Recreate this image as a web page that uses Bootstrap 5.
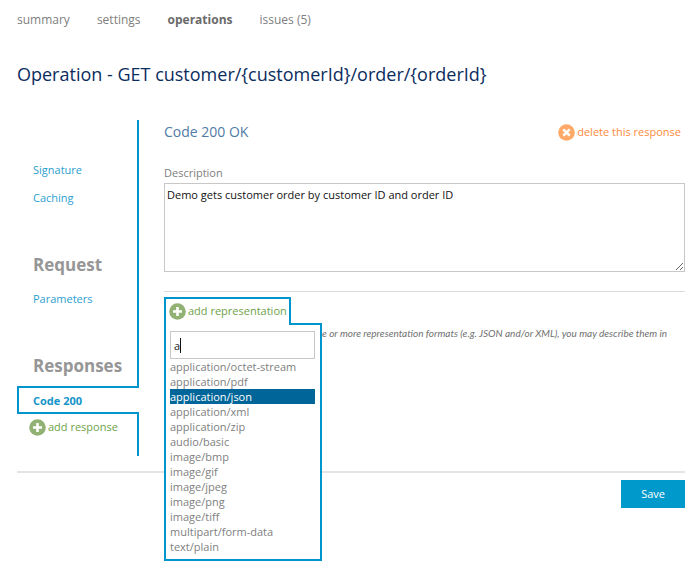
<!DOCTYPE html>
<html lang="en">
<head>
<meta charset="utf-8">
<meta name="viewport" content="width=device-width, initial-scale=1">
<title>Operation - GET customer/{customerId}/order/{orderId}</title>
<link href="https://cdn.jsdelivr.net/npm/bootstrap@5.3.0/dist/css/bootstrap.min.css" rel="stylesheet">
<style>
  body { font-family: "Open Sans", "Noto Sans", sans-serif; font-size: 11px; line-height: 15px; color: #808080; background: #fff; }
  a { text-decoration: none; }
  .page { padding: 10px 15px 0 17px; }
  .top-nav { gap: 27px; font-size: 12px; line-height: 20px; }
  .top-nav .nav-link { padding: 0; color: #808080; }
  .top-nav .nav-link.active { color: #6a6a6a; font-weight: 700; }
  .page-title { margin: 30px 0 32px; font-size: 18px; line-height: 28px; font-weight: 400; color: #0b2d5e; }
  .columns { padding-bottom: 15px; border-bottom: 2px solid #e4e4e4; }
  .side { width: 122px; margin-right: 25px; }
  .side-part { border-right: 2px solid #0096cd; padding-left: 16px; }
  .side-part a { display: block; line-height: 16px; color: #2ba0d0; }
  .side-part h2 { margin: 0; font-size: 17px; line-height: 24px; font-weight: 700; color: #969696; }
  .part-signature { padding-top: 42px; height: 133px; }
  .part-signature a + a { margin-top: 12px; }
  .part-request { height: 101px; }
  .part-request a { margin-top: 14px; }
  .part-responses { height: 34px; }
  .side-current { display: block; border: 2px solid #0096cd; border-right: 0; margin-top: -2px; margin-right: 1px; padding: 3px 0 2px 14px; line-height: 19px; font-weight: 700; color: #1494c8; }
  .side-current:hover { color: #1494c8; }
  .part-add { height: 44px; margin-top: -2px; padding: 6px 0 0 12px; }
  .icon-btn { display: inline-flex; align-items: center; gap: 2px; padding: 0; border: 0; background: none; line-height: 18px; white-space: nowrap; }
  .icon-btn svg { width: 17px; height: 17px; flex: none; }
  .add { color: #6ea24a; }
  .delete { color: #ff8a3c; }
  .response-title { margin: 0; font-size: 14px; line-height: 24px; font-weight: 400; color: #4f7ba6; }
  .field-label { margin: 21px 0 2px; line-height: 16px; display: block; }
  .description { height: 89px; padding: 3px 2px; border: 1px solid #c8c8c8; border-radius: 0; font-size: 11px; line-height: 16px; color: #111; resize: vertical; }
  .rule { margin: 19px 0 5px; border-top: 1px solid #dcdcdc; opacity: 1; color: inherit; }
  .tab { position: relative; z-index: 3; padding: 3px 2px 5px 3px; border: 2px solid #0096cd; border-bottom: 0; background: #fff; border-radius: 0; }
  .menu { top: 26px; left: 0; z-index: 2; width: 158px; padding: 6px 5px 5px 4px; border: 2px solid #0096cd; background: #fff; }
  .search { width: 100%; height: 28px; padding: 0 3px; border: 1px solid #c8c8c8; border-radius: 0; font-size: 11px; color: #222; outline: 0; caret-color: transparent; background: linear-gradient(#111, #111) 9px 6px / 1px 15px no-repeat #fff; }
  .option { display: block; width: 100%; padding: 0; border: 0; background: none; font-size: 11px; line-height: 15px; text-align: left; color: #808080; }
  .option.selected { background: #006699; color: #fff; }
  .help { margin: 0; padding-left: 158px; font-family: Lato, "Open Sans", sans-serif; font-size: 10px; font-style: italic; line-height: 16px; color: #707070; }
  .save { margin-top: 7px; padding: 6px 20px; border: 0; border-radius: 0; background: #0099cc; color: #fff; font-size: 11px; line-height: 16px; }
</style>
</head>
<body>
<svg width="0" height="0" class="d-none" aria-hidden="true">
  <symbol id="plus" viewBox="0 0 17 17"><circle cx="8.500" cy="8.500" r="8.300" fill="#92b174"/><path d="M8.500 4v9M4 8.500h9" stroke="#fff" stroke-width="2.600"/></symbol>
  <symbol id="cross" viewBox="0 0 17 17"><circle cx="8.500" cy="8.500" r="8.300" fill="#ffa968"/><path d="M5.300 5.300l6.400 6.400M11.700 5.300l-6.400 6.400" stroke="#fff" stroke-width="2.600"/></symbol>
</svg>
<div class="page min-vh-100">
  <nav class="nav top-nav">
    <a class="nav-link" href="#">summary</a>
    <a class="nav-link" href="#">settings</a>
    <a class="nav-link active" aria-current="page" href="#">operations</a>
    <a class="nav-link" href="#">issues (5)</a>
  </nav>
  <h1 class="page-title">Operation - GET customer/{customerId}/order/{orderId}</h1>

  <div class="columns d-flex align-items-start">
    <aside class="side flex-shrink-0">
      <div class="side-part part-signature">
        <a href="#">Signature</a>
        <a href="#">Caching</a>
      </div>
      <div class="side-part part-request">
        <h2>Request</h2>
        <a href="#">Parameters</a>
      </div>
      <div class="side-part part-responses"><h2>Responses</h2></div>
      <a class="side-current" href="#">Code 200</a>
      <div class="side-part part-add">
        <button type="button" class="icon-btn add"><svg aria-hidden="true"><use href="#plus"/></svg>add response</button>
      </div>
    </aside>

    <main class="flex-grow-1">
      <div class="d-flex justify-content-between align-items-center">
        <h2 class="response-title">Code 200 OK</h2>
        <button type="button" class="icon-btn delete me-1"><svg aria-hidden="true"><use href="#cross"/></svg>delete this response</button>
      </div>
      <label class="field-label" for="description">Description</label>
      <textarea id="description" class="description d-block w-100" spellcheck="false">Demo gets customer order by customer ID and order ID</textarea>
      <hr class="rule">
      <div class="position-relative">
        <button type="button" class="icon-btn add tab" aria-expanded="true" aria-controls="formats"><svg aria-hidden="true"><use href="#plus"/></svg>add representation</button>
        <div id="formats" class="menu position-absolute">
          <input type="text" class="search d-block" aria-label="Representation format" value="a">
          <button type="button" class="option">application/octet-stream</button>
          <button type="button" class="option">application/pdf</button>
          <button type="button" class="option selected">application/json</button>
          <button type="button" class="option">application/xml</button>
          <button type="button" class="option">application/zip</button>
          <button type="button" class="option">audio/basic</button>
          <button type="button" class="option">image/bmp</button>
          <button type="button" class="option">image/gif</button>
          <button type="button" class="option">image/jpeg</button>
          <button type="button" class="option">image/png</button>
          <button type="button" class="option">image/tiff</button>
          <button type="button" class="option">multipart/form-data</button>
          <button type="button" class="option">text/plain</button>
        </div>
        <p class="help">e or more representation formats (e.g. JSON and/or XML), you may describe them in</p>
      </div>
    </main>
  </div>
  <div class="text-end">
    <button type="submit" class="btn save">Save</button>
  </div>
</div>
<script src="https://cdn.jsdelivr.net/npm/bootstrap@5.3.0/dist/js/bootstrap.bundle.min.js"></script>
</body>
</html>
